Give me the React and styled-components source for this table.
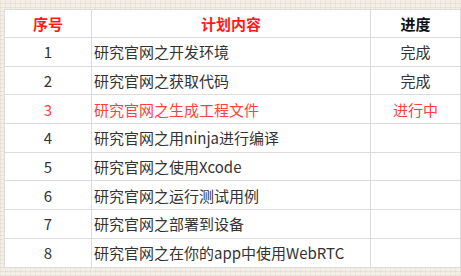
import React from "react";
import styled, { createGlobalStyle } from "styled-components";

const Global = createGlobalStyle`
  html, body {
    margin: 0;
    padding: 0;
  }
  body {
    width: 461px;
    height: 276px;
    overflow: hidden;
    background-color: #f3efe7;
    background-image:
      repeating-linear-gradient(0deg, rgba(205,195,175,0.28) 0 1px, transparent 1px 4px),
      repeating-linear-gradient(90deg, rgba(205,195,175,0.22) 0 1px, transparent 1px 5px);
    font-family: "Noto Sans CJK SC", "Noto Sans", sans-serif;
  }
`;

const Page = styled.div`
  padding: 9px 0 0 4px;
`;

const Table = styled.table`
  border-collapse: collapse;
  background: #fff;
  width: 454px;
  table-layout: fixed;
  font-size: 15px;
  color: #333;
`;

const Th = styled.th`
  border: 1.5px solid #dcdcdc;
  height: 27px;
  padding: 0;
  font-weight: bold;
  text-align: center;
  color: ${(p) => (p.$red ? "#ff1a1a" : "#111")};
  width: ${(p) => p.$w}px;
`;

const Td = styled.td`
  border: 1.5px solid #dcdcdc;
  height: 27.7px;
  padding: 0 0 0 ${(p) => (p.$left ? 2 : 0)}px;
  text-align: ${(p) => (p.$left ? "left" : "center")};
  color: ${(p) => (p.$active ? "#ff4040" : "#333")};
  white-space: nowrap;
  line-height: 1;
`;

const rows = [
  ["1", "研究官网之开发环境", "完成"],
  ["2", "研究官网之获取代码", "完成"],
  ["3", "研究官网之生成工程文件", "进行中", true],
  ["4", "研究官网之用ninja进行编译", ""],
  ["5", "研究官网之使用Xcode", ""],
  ["6", "研究官网之运行测试用例", ""],
  ["7", "研究官网之部署到设备", ""],
  ["8", "研究官网之在你的app中使用WebRTC", ""],
];

export default function App() {
  return (
    <Page>
      <Global />
      <Table>
        <thead>
          <tr>
            <Th $red $w={86}>序号</Th>
            <Th $red $w={278}>计划内容</Th>
            <Th $w={89}>进度</Th>
          </tr>
        </thead>
        <tbody>
          {rows.map(([n, t, s, active]) => (
            <tr key={n}>
              <Td $active={active}>{n}</Td>
              <Td $left $active={active}>{t}</Td>
              <Td $active={active}>{s}</Td>
            </tr>
          ))}
        </tbody>
      </Table>
    </Page>
  );
}
